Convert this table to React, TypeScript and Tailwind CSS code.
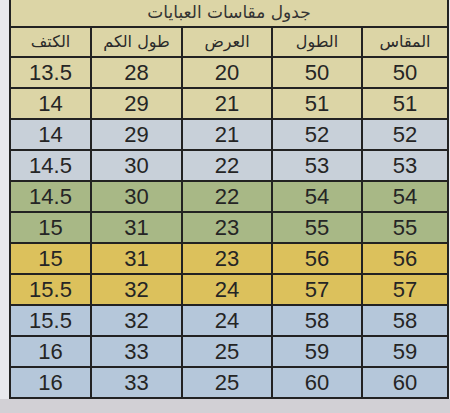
import React from "react";

const rows: { bg: string; v: string[] }[] = [
  { bg: "bg-[#dcd5a6]", v: ["50", "50", "20", "28", "13.5"] },
  { bg: "bg-[#dcd5a6]", v: ["51", "51", "21", "29", "14"] },
  { bg: "bg-[#c8d0d9]", v: ["52", "52", "21", "29", "14"] },
  { bg: "bg-[#c8d0d9]", v: ["53", "53", "22", "30", "14.5"] },
  { bg: "bg-[#a8b886]", v: ["54", "54", "22", "30", "14.5"] },
  { bg: "bg-[#a8b886]", v: ["55", "55", "23", "31", "15"] },
  { bg: "bg-[#dcc15c]", v: ["56", "56", "23", "31", "15"] },
  { bg: "bg-[#dcc15c]", v: ["57", "57", "24", "32", "15.5"] },
  { bg: "bg-[#b5c7da]", v: ["58", "58", "24", "32", "15.5"] },
  { bg: "bg-[#b5c7da]", v: ["59", "59", "25", "33", "16"] },
  { bg: "bg-[#b5c7da]", v: ["60", "60", "25", "33", "16"] },
];

const headers = ["المقاس", "الطول", "العرض", "طول الكم", "الكتف"];

export default function App() {
  return (
    <div className="w-[450px] h-[413px] overflow-hidden bg-[#d2d0d5] flex flex-col">
      <div className="flex bg-[#e8e8ed]">
        <div className="w-[9px] shrink-0" />
        <div
          dir="rtl"
          className="w-[440px] bg-[#222222] px-[2px] pb-[2px] grid grid-cols-[84px_88px_88px_89px_1fr] gap-[2px]"
        >
          <div className="col-span-5 h-[26px] bg-[#dcd5a6] flex items-center justify-center text-[17px] text-[#333] [font-family:'DejaVu_Sans',sans-serif]">
            جدول مقاسات العبايات
          </div>
          {headers.map((h) => (
            <div
              key={h}
              className="h-[28px] bg-[#dcd5a6] flex items-center justify-center text-[16px] text-[#2a2a2a] [font-family:'DejaVu_Sans',sans-serif]"
            >
              {h}
            </div>
          ))}
          {rows.map((r, i) =>
            r.v.map((v, j) => (
              <div
                key={`${i}-${j}`}
                className={`h-[29px] ${r.bg} flex items-center justify-center text-[22px] leading-none text-[#252525] [font-family:'Liberation_Sans',Arial,sans-serif]`}
              >
                {v}
              </div>
            ))
          )}
        </div>
        <div className="flex-1" />
      </div>
      <div className="flex-1" />
    </div>
  );
}
